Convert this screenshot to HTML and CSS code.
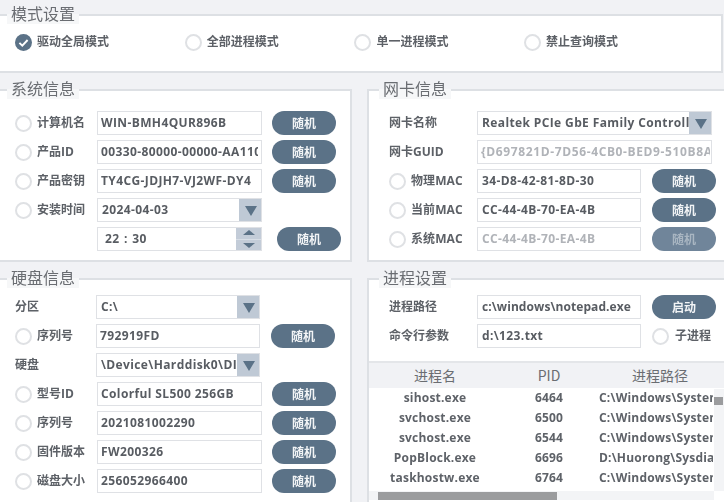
FILE: index.html
```html
<!DOCTYPE html>
<html lang="zh">
<head>
<meta charset="utf-8">
<title>模式设置</title>
<link rel="stylesheet" href="styles.css">
</head>
<body>
<div class="app">
  <section class="panel mode">
    <h2 class="title">模式设置</h2>
    <div class="mode-row">
      <label class="mode-item"><svg class="check" viewBox="0 0 17 17"><circle cx="8.5" cy="8.5" r="8.5" fill="#5b7287"/><path d="M4.4 8.8l2.9 2.9 5.3-5.7" fill="none" stroke="#fff" stroke-width="1.9"/></svg>驱动全局模式</label>
      <label class="mode-item"><span class="radio"></span>全部进程模式</label>
      <label class="mode-item"><span class="radio"></span>单一进程模式</label>
      <label class="mode-item"><span class="radio"></span>禁止查询模式</label>
    </div>
  </section>

  <div class="columns">
    <section class="panel sys">
      <h2 class="title">系统信息</h2>
      <div class="rows">
        <div class="row"><span class="radio"></span><span class="label">计算机名</span><div class="field">WIN-BMH4QUR896B</div><button class="btn">随机</button></div>
        <div class="row"><span class="radio"></span><span class="label">产品ID</span><div class="field"><span class="clip">00330-80000-00000-AA110</span></div><button class="btn">随机</button></div>
        <div class="row"><span class="radio"></span><span class="label">产品密钥</span><div class="field"><span class="clip">TY4CG-JDJH7-VJ2WF-DY4</span></div><button class="btn">随机</button></div>
        <div class="row"><span class="radio"></span><span class="label">安装时间</span><div class="field combo"><span class="combo-text">2024-04-03</span><span class="arrow"><svg width="14" height="10" viewBox="0 0 14 10"><path d="M1 0h12L7 10z" fill="#5b7287"/></svg></span></div></div>
        <div class="row"><span class="spacer"></span><div class="field combo time"><span class="combo-text">22 : 30</span><span class="spin"><span><svg width="12" height="5" viewBox="0 0 12 5"><path d="M6 0l6 5H0z" fill="#5b7287"/></svg></span><span><svg width="12" height="5" viewBox="0 0 12 5"><path d="M0 0h12L6 5z" fill="#5b7287"/></svg></span></span></div><button class="btn btn-far">随机</button></div>
      </div>
    </section>

    <section class="panel net">
      <h2 class="title">网卡信息</h2>
      <div class="rows">
        <div class="row"><span class="label wide">网卡名称</span><div class="field combo long"><span class="combo-text">Realtek PCIe GbE Family Controller</span><span class="arrow"><svg width="14" height="10" viewBox="0 0 14 10"><path d="M1 0h12L7 10z" fill="#5b7287"/></svg></span></div></div>
        <div class="row"><span class="label wide">网卡GUID</span><div class="field long muted spaced"><span class="clip">{D697821D-7D56-4CB0-BED9-510B8A</span></div></div>
        <div class="row"><span class="radio"></span><span class="label mac">物理MAC</span><div class="field short">34-D8-42-81-8D-30</div><button class="btn gap11">随机</button></div>
        <div class="row"><span class="radio"></span><span class="label mac">当前MAC</span><div class="field short">CC-44-4B-70-EA-4B</div><button class="btn gap11">随机</button></div>
        <div class="row"><span class="radio"></span><span class="label mac">系统MAC</span><div class="field short muted">CC-44-4B-70-EA-4B</div><button class="btn gap11 off">随机</button></div>
      </div>
    </section>

    <section class="panel disk">
      <h2 class="title">硬盘信息</h2>
      <div class="rows tight">
        <div class="row shift"><span class="label wide">分区</span><div class="field combo"><span class="combo-text plain">C:\</span><span class="arrow"><svg width="14" height="10" viewBox="0 0 14 10"><path d="M1 0h12L7 10z" fill="#5b7287"/></svg></span></div></div>
        <div class="row shift"><span class="radio"></span><span class="label">序列号</span><div class="field">792919FD</div><button class="btn gap11">随机</button></div>
        <div class="row shift"><span class="label wide">硬盘</span><div class="field combo"><span class="combo-text">\Device\Harddisk0\DI</span><span class="arrow"><svg width="14" height="10" viewBox="0 0 14 10"><path d="M1 0h12L7 10z" fill="#5b7287"/></svg></span></div></div>
        <div class="row"><span class="radio"></span><span class="label">型号ID</span><div class="field">Colorful SL500 256GB</div><button class="btn">随机</button></div>
        <div class="row"><span class="radio"></span><span class="label">序列号</span><div class="field">2021081002290</div><button class="btn">随机</button></div>
        <div class="row"><span class="radio"></span><span class="label">固件版本</span><div class="field">FW200326</div><button class="btn">随机</button></div>
        <div class="row"><span class="radio"></span><span class="label">磁盘大小</span><div class="field">256052966400</div><button class="btn">随机</button></div>
      </div>
    </section>

    <section class="panel proc">
      <h2 class="title">进程设置</h2>
      <div class="rows tight">
        <div class="row"><span class="label wide">进程路径</span><div class="field short narrow">c:\windows\notepad.exe</div><button class="btn gap11">启动</button></div>
        <div class="row"><span class="label wide">命令行参数</span><div class="field short">d:\123.txt</div><label class="sub"><span class="radio"></span>子进程</label></div>
      </div>
      <div class="table">
        <div class="thead"><span class="c-name">进程名</span><span class="c-pid">PID</span><span class="c-path center">进程路径</span></div>
        <div class="tbody">
          <div class="tr"><span class="c-name">sihost.exe</span><span class="c-pid">6464</span><span class="c-path">C:\Windows\System32\sihost.exe</span></div>
          <div class="tr"><span class="c-name">svchost.exe</span><span class="c-pid">6500</span><span class="c-path">C:\Windows\System32\svchost.exe</span></div>
          <div class="tr"><span class="c-name">svchost.exe</span><span class="c-pid">6544</span><span class="c-path">C:\Windows\System32\svchost.exe</span></div>
          <div class="tr"><span class="c-name">PopBlock.exe</span><span class="c-pid">6696</span><span class="c-path">D:\Huorong\Sysdiag\bin\PopBlock.exe</span></div>
          <div class="tr"><span class="c-name">taskhostw.exe</span><span class="c-pid">6764</span><span class="c-path">C:\Windows\System32\taskhostw.exe</span></div>
          <div class="vbar"><span class="vthumb"></span></div>
          <div class="hbar"><span class="hthumb"></span></div>
        </div>
      </div>
    </section>
  </div>
</div>
</body>
</html>
```
FILE: styles.css
```css
* { box-sizing: border-box; }
html, body { margin: 0; height: 100%; overflow: hidden; }
body {
  width: 724px;
  height: 502px;
  background: #f1f2f5;
  color: #5d6167;
  font: 600 12px/1.2 "Open Sans", "Noto Sans CJK SC", sans-serif;
}
.app { padding-top: 14px; margin-left: -4px; width: 736px; filter: blur(0.4px); }
.panel {
  background: #fff;
  border: 2px solid #dde0e4;
}
.title {
  margin: -14px 0 0 9px;
  padding: 0 4px;
  width: fit-content;
  height: 22px;
  background: linear-gradient(#f1f2f5 55%, #f6f7f8 55%);
  font: 400 16px/22px "Noto Sans CJK SC", sans-serif;
  color: #6a6d72;
}
.net .title, .proc .title { margin-left: 10px; }
.mode { width: 727px; height: 59px; }
.mode-row { display: flex; padding: 8px 0 0 17px; }
.mode-item { display: flex; align-items: center; width: 169.7px; height: 20px; gap: 5px; font-size: 12px; }
.check { width: 17px; height: 17px; flex: none; }
.radio {
  flex: none;
  width: 17px;
  height: 17px;
  border-radius: 50%;
  border: 2px solid #dfe1e4;
  background: #fff;
}
.columns {
  display: grid;
  grid-template-columns: 356px 380px;
  grid-template-rows: 173px 240px;
  column-gap: 15px;
  row-gap: 16px;
  margin-top: 16px;
  width: 751px;
}
.rows { display: flex; flex-direction: column; gap: 5px; padding: 12px 0 0 17px; }
.net .rows, .proc .rows { padding-left: 20px; }
.disk .rows, .proc .rows { padding-top: 7px; }
.row { display: flex; align-items: center; height: 24px; }
.label { width: 60px; margin-left: 5px; flex: none; white-space: nowrap; font-weight: 700; }
.label.wide { width: 88px; margin-left: 0; }
.label.mac { width: 66px; letter-spacing: 0.1px; }
.shift .label { width: 59px; }
.disk .shift .label.wide { width: 81px; }
.spacer { width: 82px; flex: none; }
.field {
  flex: none;
  width: 165px;
  height: 24px;
  padding: 0 3px;
  border: 1px solid #dfe1e5;
  background: #fff;
  color: #585c62;
  font-weight: 700;
  font-size: 12px;
  line-height: 22px;
  letter-spacing: 0.38px;
  overflow: hidden;
  white-space: nowrap;
}
.clip { display: block; overflow: hidden; }
.long { width: 235px; }
.long .clip { margin-right: -2px; }
.short { width: 164px; padding-left: 4px; }
.spaced { padding-left: 3px; letter-spacing: 0.62px; }
.narrow { letter-spacing: 0.08px; }
.muted { color: #b0b3b8; }
.combo { display: flex; padding: 0; }
.combo-text { flex: 1; min-width: 0; padding-left: 4px; overflow: hidden; }
.arrow { flex: none; width: 23px; margin: -1px -1px -1px 0; display: flex; align-items: center; justify-content: center; background: #bfc9d5; padding-top: 1px; }
.time .combo-text { padding-left: 7px; word-spacing: 1px; }
.spin { flex: none; width: 26px; margin: -1px -1px -1px 0; display: flex; flex-direction: column; background: #c3ccd8; }
.spin span { flex: 1; display: flex; align-items: center; justify-content: center; }
.spin span + span { border-top: 1px solid #d8dee6; }
.btn {
  flex: none;
  width: 64px;
  height: 24px;
  margin-left: 10px;
  padding: 0;
  border: 0;
  border-radius: 12px;
  background: #5b7287;
  color: #f2f4f6;
  font: 600 12px/24px "Noto Sans CJK SC", sans-serif;
}
.btn-far { margin-left: 15px; }
.gap11 { margin-left: 11px; }
.off { background: #70859a; color: #a9b6c2; }
.shift .field { width: 164px; }
.sub { display: flex; align-items: center; gap: 6px; margin-left: 11px; }
.table { margin-top: 13px; border-top: 2px solid #e4e6e9; position: relative; }
.thead { display: flex; height: 25px; background: #f1f2f5; font: 400 14px/25px "Noto Sans CJK SC", "Open Sans", sans-serif; color: #6a6d72; }
.c-name { flex: none; width: 132px; text-align: center; }
.c-pid { flex: none; width: 96px; text-align: center; }
.c-path { flex: none; width: 116px; padding-left: 2px; overflow: hidden; white-space: nowrap; }
.center { width: 126px; text-align: center; padding: 0; }
.tbody { position: relative; height: 116px; }
.tr { display: flex; height: 20px; line-height: 20px; font-weight: 700; letter-spacing: 0.2px; color: #5e6268; }
.vbar { position: absolute; left: 345px; top: 1px; width: 12px; height: 102px; background: #f3f4f6; }
.vthumb { position: absolute; left: 0; top: 8px; width: 9px; height: 8px; background: #9b9c9e; }
.hbar { position: absolute; left: 0; top: 103px; width: 345px; height: 9px; background: #f3f4f6; }
.hthumb { position: absolute; left: 9px; top: 1px; width: 179px; height: 8px; background: #9b9c9e; }
```
